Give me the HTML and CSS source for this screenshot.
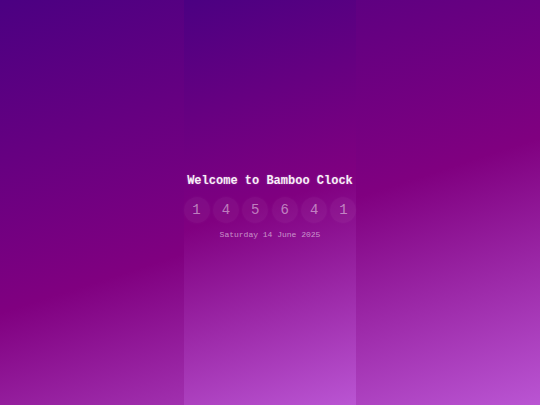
FILE: index.html
```html
<!DOCTYPE html>
<html lang="en">
<head>
<meta charset="utf-8">
<title>Bamboo Clock</title>
<link rel="stylesheet" href="styles.css">
</head>
<body>
<main class="page">
  <section class="panel">
    <h1 class="title">Welcome to Bamboo Clock</h1>
    <div class="digits">
      <span class="digit">1</span>
      <span class="digit">4</span>
      <span class="digit">5</span>
      <span class="digit">6</span>
      <span class="digit">4</span>
      <span class="digit">1</span>
    </div>
    <p class="date">Saturday 14 June 2025</p>
  </section>
</main>
</body>
</html>
```

FILE: styles.css
```css
html, body {
  margin: 0;
  padding: 0;
  height: 100%;
}

body {
  font-family: "Liberation Mono", "Courier New", monospace;
}

.page {
  display: flex;
  justify-content: center;
  height: 100vh;
  background: linear-gradient(162deg, #4b0082 0%, #800080 54%, #ba55d3 100%);
}

.panel {
  display: flex;
  flex-direction: column;
  justify-content: center;
  align-items: center;
  padding-top: 8px;
  box-sizing: border-box;
  background: linear-gradient(162deg, #4b0082 0%, #800080 50%, #ba55d3 100%);
}

.title {
  margin: 0;
  font-size: 12px;
  line-height: 16px;
  font-weight: bold;
  color: #f8eef8;
  text-shadow: 0 0 2px rgba(255, 255, 255, 0.25);
}

.digits {
  display: flex;
  gap: 3.4px;
  margin-top: 8px;
}

.digit {
  width: 26px;
  height: 26px;
  border-radius: 50%;
  background: rgba(255, 255, 255, 0.045);
  box-shadow: 0 0 3px rgba(255, 255, 255, 0.04);
  display: flex;
  align-items: center;
  justify-content: center;
  font-size: 14px;
  color: rgba(255, 255, 255, 0.48);
}

.date {
  margin: 7px 0 0;
  font-size: 8px;
  line-height: 10px;
  color: rgba(255, 255, 255, 0.55);
}
```
